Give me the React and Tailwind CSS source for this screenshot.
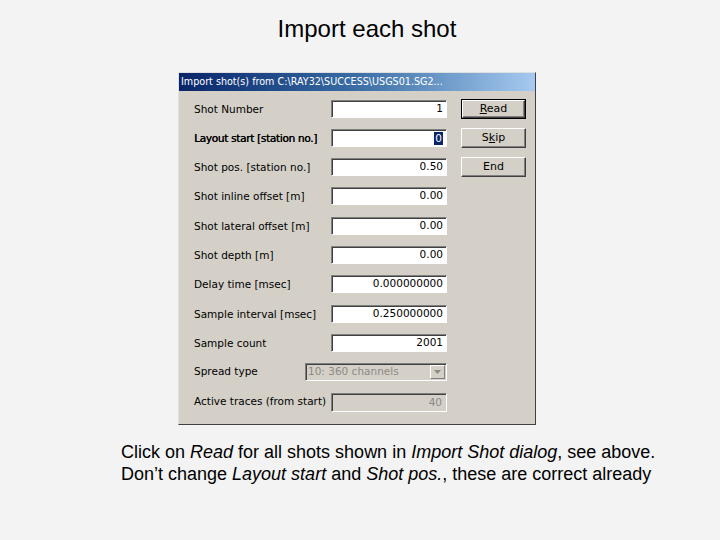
import React from 'react';

const rows = [
  { label: 'Shot Number', value: '1', h: 'h-[29px]' },
  { label: 'Layout start [station no.]', value: '0', selected: true, bold: true, h: 'h-[29px]' },
  { label: 'Shot pos. [station no.]', value: '0.50', h: 'h-[29px]' },
  { label: 'Shot inline offset [m]', value: '0.00', h: 'h-[30px]' },
  { label: 'Shot lateral offset [m]', value: '0.00', h: 'h-[29px]' },
  { label: 'Shot depth [m]', value: '0.00', h: 'h-[29px]' },
  { label: 'Delay time [msec]', value: '0.000000000', h: 'h-[30px]' },
  { label: 'Sample interval [msec]', value: '0.250000000', h: 'h-[29px]' },
  { label: 'Sample count', value: '2001', h: 'h-[29px]' },
];

const sunken = 'border border-t-[#808080] border-l-[#808080] border-r-white border-b-white shadow-[inset_1px_1px_0_#404040]';

function Button({ children, primary }) {
  return (
    <div className={`h-[20px] w-[65px] ${primary ? 'border border-black' : ''}`}>
      <div className="h-full w-full flex items-center justify-center border border-t-white border-l-white border-r-[#404040] border-b-[#404040] shadow-[inset_-1px_-1px_0_#808080] text-[11px] text-black">
        {children}
      </div>
    </div>
  );
}

export default function App() {
  return (
    <div className="w-[720px] h-[540px] bg-[#f3f3f3] flex flex-col" style={{ fontFamily: '"Liberation Sans", Arial, sans-serif' }}>
      <h1 className="pt-[15px] text-center text-[24px] leading-[28px] text-black pl-[14px]">Import each shot</h1>

      {/* Dialog */}
      <div className="ml-[178px] mt-[29px] w-[358px] h-[353px] bg-[#d4d0c8] border border-t-[#dfdfdf] border-l-[#dfdfdf] border-r-[#404040] border-b-[#404040] flex flex-col">
        <div className="h-[18px] bg-gradient-to-r from-[#0a246a] via-[#3a6ea5] to-[#a6caf0] text-white leading-[18px] pl-[2px] whitespace-nowrap overflow-hidden" style={{ fontFamily: '"DejaVu Sans", sans-serif', fontSize: '9.6px' }}>
          Import shot(s) from C:\RAY32\SUCCESS\USGS01.SG2...
        </div>
        <div className="flex pt-[9px] pl-[15px]" style={{ fontFamily: '"DejaVu Sans", sans-serif' }}>
          <div className="flex flex-col w-[253px]">
            {rows.map((r) => (
              <div key={r.label} className={`${r.h} flex items-start`}>
                <span className={`w-[137px] text-[10.5px] leading-[18px] text-black whitespace-nowrap ${r.bold ? 'tracking-[-0.3px] [text-shadow:0.4px_0_0_#000]' : ''}`}>{r.label}</span>
                <div className={`w-[116px] h-[18px] bg-white ${sunken} flex items-center justify-end pr-[3px] text-[10.5px] text-black`}>
                  {r.selected ? <span className="bg-[#0a246a] text-white px-[1px] leading-[13px]">{r.value}</span> : r.value}
                </div>
              </div>
            ))}
            <div className="h-[30px] flex items-start">
              <span className="w-[111px] text-[10.5px] leading-[16px] text-black whitespace-nowrap">Spread type</span>
              <div className={`w-[142px] h-[18px] bg-[#d4d0c8] ${sunken} flex items-center`}>
                <span className="flex-1 pl-[2px] text-[10.5px] text-[#8c8a86] whitespace-nowrap">10: 360 channels</span>
                <div className="w-[15px] h-[14px] mr-[1px] bg-[#d4d0c8] border border-t-white border-l-white border-r-[#808080] border-b-[#808080] flex items-center justify-center">
                  <svg width="7" height="4" viewBox="0 0 7 4"><path d="M0 0h7L3.5 4z" fill="#8c8a86" /></svg>
                </div>
              </div>
            </div>
            <div className="h-[29px] flex items-start">
              <span className="w-[137px] text-[10.5px] leading-[16px] text-black whitespace-nowrap">Active traces (from start)</span>
              <div className={`w-[116px] h-[19px] bg-[#d4d0c8] ${sunken} flex items-center justify-end pr-[4px] text-[10.5px] text-[#8c8a86]`}>
                40
              </div>
            </div>
          </div>
          <div className="ml-[14px] -mt-[1px] flex flex-col gap-[9px]">
            <Button primary><span><u>R</u>ead</span></Button>
            <Button><span>S<u>k</u>ip</span></Button>
            <Button>End</Button>
          </div>
        </div>
      </div>

      <div className="ml-[121px] mt-[16px] text-[18px] leading-[22px] text-black">
        <p>Click on <i>Read</i> for all shots shown in <i>Import Shot dialog</i>, see above.</p>
        <p>Don’t change <i>Layout start</i> and <i>Shot pos.</i>, these are correct already</p>
      </div>
    </div>
  );
}
